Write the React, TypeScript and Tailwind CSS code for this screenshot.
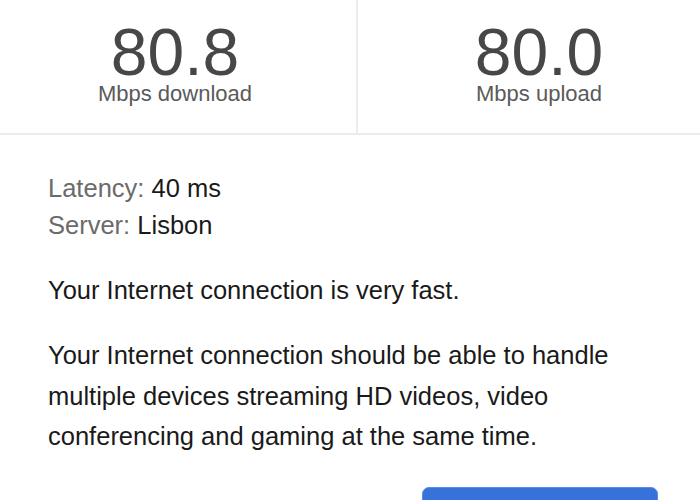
export default function App() {
  return (
    <div className="w-[700px] h-[500px] overflow-hidden bg-white font-['Liberation_Sans',Arial,sans-serif]">
      {/* speed results */}
      <div className="flex w-[720px] h-[135px] border-b-2 border-[#ececec]">
        <div className="w-[358px] pr-[6px] pt-[21px] flex flex-col items-center border-r-2 border-[#ececec]">
          <div className="text-[66px] leading-[62px] text-[#474747]">80.8</div>
          <div className="text-[22px] leading-none text-[#5a5a5a]">Mbps download</div>
        </div>
        <div className="flex-1 pt-[21px] flex flex-col items-center">
          <div className="text-[66px] leading-[62px] text-[#474747]">80.0</div>
          <div className="text-[22px] leading-none text-[#5a5a5a]">Mbps upload</div>
        </div>
      </div>

      {/* details */}
      <div className="pl-[48px] pr-[42px] pt-[35px] text-[25.5px] text-[#1a1a1a]">
        <div className="leading-[37px]">
          <div>
            <span className="text-[#6b6b6b]">Latency:</span> 40 ms
          </div>
          <div>
            <span className="text-[#6b6b6b]">Server:</span> Lisbon
          </div>
        </div>
        <p className="mt-[26px] leading-[40px]">Your Internet connection is very fast.</p>
        <p className="mt-[25px] leading-[40.5px]">
          Your Internet connection should be able to handle multiple devices streaming HD videos, video
          conferencing and gaming at the same time.
        </p>
        <div className="flex justify-end mt-[30px]">
          <button className="w-[236px] h-[40px] rounded-[7px] bg-[#3672d9] border border-[#5a8de6]" />
        </div>
      </div>
    </div>
  )
}
